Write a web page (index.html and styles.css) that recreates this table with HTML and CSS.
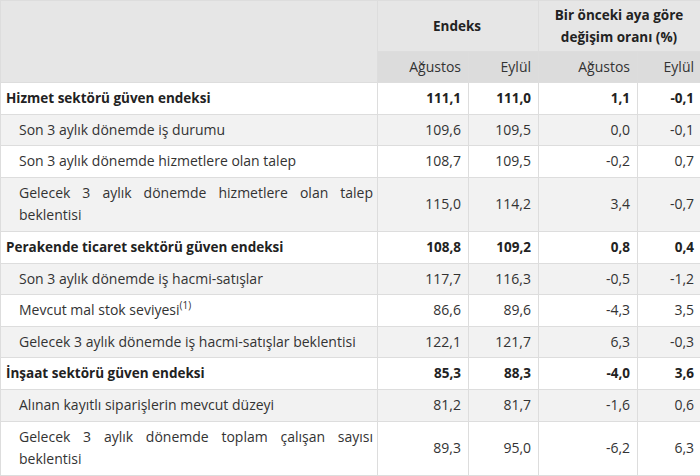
FILE: index.html
```html
<!DOCTYPE html>
<html lang="tr">
<head>
<meta charset="utf-8">
<link rel="stylesheet" href="styles.css">
</head>
<body>
<table class="tbl">
  <colgroup>
    <col class="c1"><col class="c2"><col class="c3"><col class="c4"><col class="c5">
  </colgroup>
  <thead>
    <tr class="h1">
      <th rowspan="2" class="blank"></th>
      <th colspan="2" class="grp">Endeks</th>
      <th colspan="2" class="grp">Bir önceki aya göre<br>değişim oranı (%)</th>
    </tr>
    <tr class="h2">
      <th class="sub">Ağustos</th>
      <th class="sub">Eylül</th>
      <th class="sub">Ağustos</th>
      <th class="sub">Eylül</th>
    </tr>
  </thead>
  <tbody>
    <tr class="main"><td class="lbl">Hizmet sektörü güven endeksi</td><td>111,1</td><td>111,0</td><td>1,1</td><td>-0,1</td></tr>
    <tr class="alt"><td class="lbl sublbl">Son 3 aylık dönemde iş durumu</td><td>109,6</td><td>109,5</td><td>0,0</td><td>-0,1</td></tr>
    <tr><td class="lbl sublbl">Son 3 aylık dönemde hizmetlere olan talep</td><td>108,7</td><td>109,5</td><td>-0,2</td><td>0,7</td></tr>
    <tr class="alt"><td class="lbl sublbl">Gelecek 3 aylık dönemde hizmetlere olan talep beklentisi</td><td>115,0</td><td>114,2</td><td>3,4</td><td>-0,7</td></tr>
    <tr class="main"><td class="lbl">Perakende ticaret sektörü güven endeksi</td><td>108,8</td><td>109,2</td><td>0,8</td><td>0,4</td></tr>
    <tr class="alt"><td class="lbl sublbl">Son 3 aylık dönemde iş hacmi-satışlar</td><td>117,7</td><td>116,3</td><td>-0,5</td><td>-1,2</td></tr>
    <tr><td class="lbl sublbl">Mevcut mal stok seviyesi<sup>(1)</sup></td><td>86,6</td><td>89,6</td><td>-4,3</td><td>3,5</td></tr>
    <tr class="alt"><td class="lbl sublbl">Gelecek 3 aylık dönemde iş hacmi-satışlar beklentisi</td><td>122,1</td><td>121,7</td><td>6,3</td><td>-0,3</td></tr>
    <tr class="main"><td class="lbl">İnşaat sektörü güven endeksi</td><td>85,3</td><td>88,3</td><td>-4,0</td><td>3,6</td></tr>
    <tr class="alt"><td class="lbl sublbl">Alınan kayıtlı siparişlerin mevcut düzeyi</td><td>81,2</td><td>81,7</td><td>-1,6</td><td>0,6</td></tr>
    <tr><td class="lbl sublbl">Gelecek 3 aylık dönemde toplam çalışan sayısı beklentisi</td><td>89,3</td><td>95,0</td><td>-6,2</td><td>6,3</td></tr>
  </tbody>
</table>
</body>
</html>
```

FILE: styles.css
```css
html, body {
  margin: 0;
  padding: 0;
  background: #ffffff;
}
body {
  font-family: "Open Sans", "Noto Sans", sans-serif;
  font-size: 14px;
  color: #333333;
}
.tbl {
  border-collapse: collapse;
  table-layout: fixed;
  width: 701px;
}
.c1 { width: 377px; }
.c2 { width: 91px; }
.c3 { width: 70px; }
.c4 { width: 99px; }
.c5 { width: 64px; }
.tbl th, .tbl td {
  border: 1px solid #dddddd;
  line-height: 22px;
  padding: 4px 7px 4px 5px;
  vertical-align: middle;
}
.h1 th {
  background: #e6e6e6;
  height: 42px;
  padding-top: 3px;
  padding-bottom: 3px;
}
.blank {
  background: #e6e6e6;
}
.grp {
  font-weight: bold;
  font-size: 13.5px;
  color: #222222;
  text-align: center;
}
.h2 th {
  background: #dcdcdc;
  font-weight: normal;
  text-align: right;
  color: #333333;
}
.tbl td {
  text-align: right;
  line-height: 22.6px;
}
.tbl td.lbl {
  text-align: justify;
  padding-right: 4px;
}
.tbl td.sublbl {
  padding-left: 18px;
}
.main td {
  font-weight: bold;
  font-size: 13.5px;
  color: #222222;
}
.alt td {
  background: #f2f2f2;
}
sup {
  font-size: 10px;
  line-height: 0;
  vertical-align: 6px;
}
```
